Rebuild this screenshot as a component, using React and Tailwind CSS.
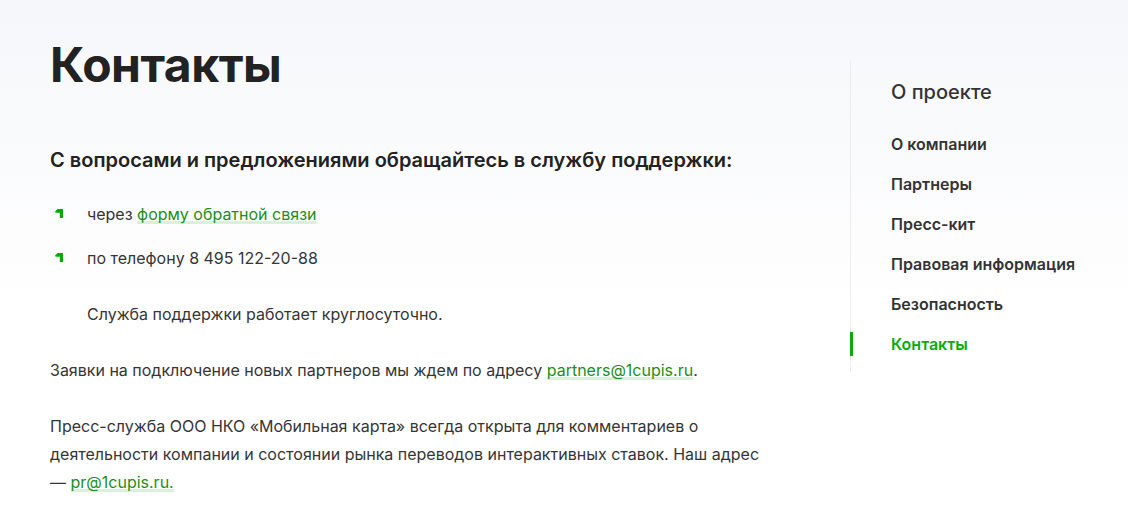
import React from "react";

function Bullet() {
  return (
    <svg width="8" height="9" viewBox="0 0 8 9" className="shrink-0 mt-[-2px]">
      <polygon points="0,2.6 2.6,0 8,0 8,9 4.8,9 4.8,3.8 0.6,3.8" fill="#0aa80a" />
    </svg>
  );
}

function Link({ children }) {
  return (
    <a
      href="#"
      className="text-[#1a8f1a] bg-[linear-gradient(#d9f1d9,#d9f1d9)] bg-no-repeat bg-[length:100%_3px] bg-bottom"
    >
      {children}
    </a>
  );
}

export default function App() {
  const items = ["О компании", "Партнеры", "Пресс-кит", "Правовая информация", "Безопасность"];
  return (
    <div
      className="w-[1128px] h-[532px] bg-linear-to-b from-[#f6f7fa] to-white to-60% text-[#353535] flex overflow-hidden"
      style={{ fontFamily: "Inter, 'Noto Sans', sans-serif" }}
    >
      <main className="w-[850px] pl-[50px] pt-[37px] shrink-0">
        <h1 className="text-[48px] leading-[56px] font-bold text-[#222] tracking-[-0.5px]">Контакты</h1>
        <h2 className="mt-[53px] text-[20px] leading-[28px] font-semibold text-[#222]">
          С вопросами и предложениями обращайтесь в службу поддержки:
        </h2>
        <ul className="mt-[26px] flex flex-col gap-4 text-[16px] leading-[28px]">
          <li className="flex items-center">
            <span className="w-[37px] flex pl-[5px]"><Bullet /></span>
            <span>через <Link>форму обратной связи</Link></span>
          </li>
          <li className="flex items-center">
            <span className="w-[37px] flex pl-[5px]"><Bullet /></span>
            <span>по телефону 8 495 122-20-88</span>
          </li>
        </ul>
        <p className="mt-[28px] pl-[37px] text-[16px] leading-[28px]">Служба поддержки работает круглосуточно.</p>
        <p className="mt-[28px] text-[16px] leading-[28px]">
          Заявки на подключение новых партнеров мы ждем по адресу <Link>partners@1cupis.ru</Link>.
        </p>
        <p className="mt-[28px] text-[16px] leading-[28px] w-[716px]">
          Пресс-служба ООО НКО «Мобильная карта» всегда открыта для комментариев о деятельности компании и состоянии рынка переводов интерактивных ставок. Наш адрес — <Link>pr@1cupis.ru.</Link>
        </p>
      </main>
      <div className="pt-[60px]">
        <aside className="border-l border-[#ececee] pl-10 pt-[18px] pb-[16px] pr-6">
          <div className="text-[20px] leading-[28px] font-medium text-[#333]">О проекте</div>
          <ul className="mt-[26px] flex flex-col gap-4 text-[16px] leading-[24px] font-semibold text-[#333]">
            {items.map((t) => (
              <li key={t}>{t}</li>
            ))}
            <li className="relative text-[#0aab0a]">
              <span className="absolute left-[-41px] top-0 w-[3px] h-[24px] bg-[#0aab0a]" />
              Контакты
            </li>
          </ul>
        </aside>
      </div>
    </div>
  );
}
